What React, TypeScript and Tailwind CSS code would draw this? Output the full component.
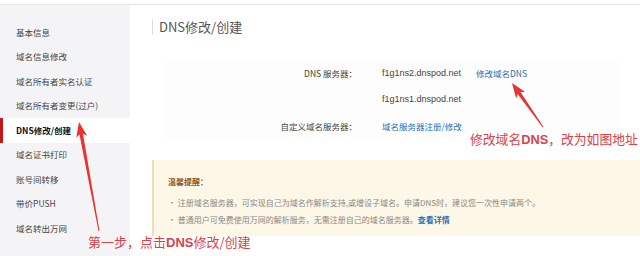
import React from "react";

const menu = [
  "基本信息",
  "域名信息修改",
  "域名所有者实名认证",
  "域名所有者变更(过户)",
  "DNS修改/创建",
  "域名证书打印",
  "账号间转移",
  "带价PUSH",
  "域名转出万网",
];

function Arrow({ x1, y1, x2, y2 }: { x1: number; y1: number; x2: number; y2: number }) {
  const dx = x2 - x1;
  const dy = y2 - y1;
  const len = Math.hypot(dx, dy);
  const ux = dx / len;
  const uy = dy / len;
  const px = -uy;
  const py = ux;
  const hb = 15;
  const bx = x2 - ux * hb;
  const by = y2 - uy * hb;
  // arrow head with a notch at the back
  const nx = bx + ux * 4;
  const ny = by + uy * 4;
  const head = `${x2},${y2} ${bx + px * 5.5},${by + py * 5.5} ${nx},${ny} ${bx - px * 5.5},${by - py * 5.5}`;
  const shaft = `${x1 + px * 0.5},${y1 + py * 0.5} ${nx + px * 1.8},${ny + py * 1.8} ${nx - px * 1.8},${ny - py * 1.8} ${x1 - px * 0.5},${y1 - py * 0.5}`;
  return (
    <g fill="#e8322f">
      <polygon points={shaft} />
      <polygon points={head} />
    </g>
  );
}

export default function App() {
  return (
    <div
      className="relative w-[640px] h-[256px] overflow-hidden bg-white"
      style={{ fontFamily: '"Microsoft YaHei", "Noto Sans CJK SC", sans-serif' }}
    >
      <div className="h-[5px] border-b border-[#e6e6e6]" />
      <div className="flex h-[251px]">
        {/* Sidebar */}
        <div className="w-[130px] bg-[#f4f4f6] pt-[15px]">
          {menu.map((m, i) => {
            const active = i === 4;
            return (
              <div
                key={m}
                className={`relative h-[24.5px] flex items-center pl-[16px] text-[8.5px] ${
                  active ? "bg-white font-bold text-[#111]" : "text-[#444]"
                }`}
              >
                {active && <div className="absolute left-0 top-0 bottom-0 w-[3px] bg-[#c5161d]" />}
                {m}
              </div>
            );
          })}
        </div>

        {/* Content */}
        <div className="flex-1 pl-[22px] pt-[14px]">
          <div className="border-l border-[#ddd] pl-[6px] text-[13px] leading-[16px] text-[#555]">DNS修改/创建</div>

          <div className="mt-[25px] ml-[14px] mr-[20px] bg-[#fdfdfd] text-[8.5px] text-[#444]">
            <div className="flex items-center h-[26.5px]">
              <div className="w-[191px] text-right">DNS 服务器：</div>
              <div className="ml-[25px] w-[94px] font-['Liberation_Sans'] text-[9px]">f1g1ns2.dnspod.net</div>
              <div className="text-[#2a6fb5]">修改域名DNS</div>
            </div>
            <div className="flex items-center h-[26.5px]">
              <div className="w-[191px]" />
              <div className="ml-[25px] font-['Liberation_Sans'] text-[9px]">f1g1ns1.dnspod.net</div>
            </div>
            <div className="flex items-center h-[26.5px]">
              <div className="w-[191px] text-right">自定义域名服务器：</div>
              <div className="ml-[25px] text-[#2a6fb5]">域名服务器注册/修改</div>
            </div>
          </div>

          <div className="mt-[20.5px] h-[76px] bg-[#fcf7e6] border-l-2 border-[#ecdfb6] pl-[14px] pt-[16px] text-[8px] leading-[12px]">
            <div className="font-bold text-[#8b5a2b]">温馨提醒：</div>
            <div className="mt-[9px] text-[#888]">• 注册域名服务器，可实现自己为域名作解析支持,或增设子域名。申请DNS时，建议您一次性申请两个。</div>
            <div className="mt-[5px] text-[#888]">
              • 普通用户可免费使用万网的解析服务，无需注册自己的域名服务器。<span className="text-[#2a6fb5] font-bold">查看详情</span>
            </div>
          </div>
        </div>
      </div>

      {/* Annotations */}
      <svg className="absolute inset-0 pointer-events-none" width="640" height="256">
        <Arrow x1={543} y1={127} x2={512} y2={83} />
        <Arrow x1={99} y1={231} x2={79} y2={122} />
      </svg>
      <div className="absolute left-[470px] top-[130px] whitespace-nowrap text-[12.8px] leading-[18px] text-[#d9424a]">
        修改域名<span className="font-bold font-['Liberation_Sans']">DNS</span>，改为如图地址
      </div>
      <div className="absolute left-[88px] top-[233px] whitespace-nowrap text-[13px] leading-[18px] text-[#d9424a]">
        第一步，点击<span className="font-bold font-['Liberation_Sans']">DNS</span>修改/创建
      </div>
    </div>
  );
}
